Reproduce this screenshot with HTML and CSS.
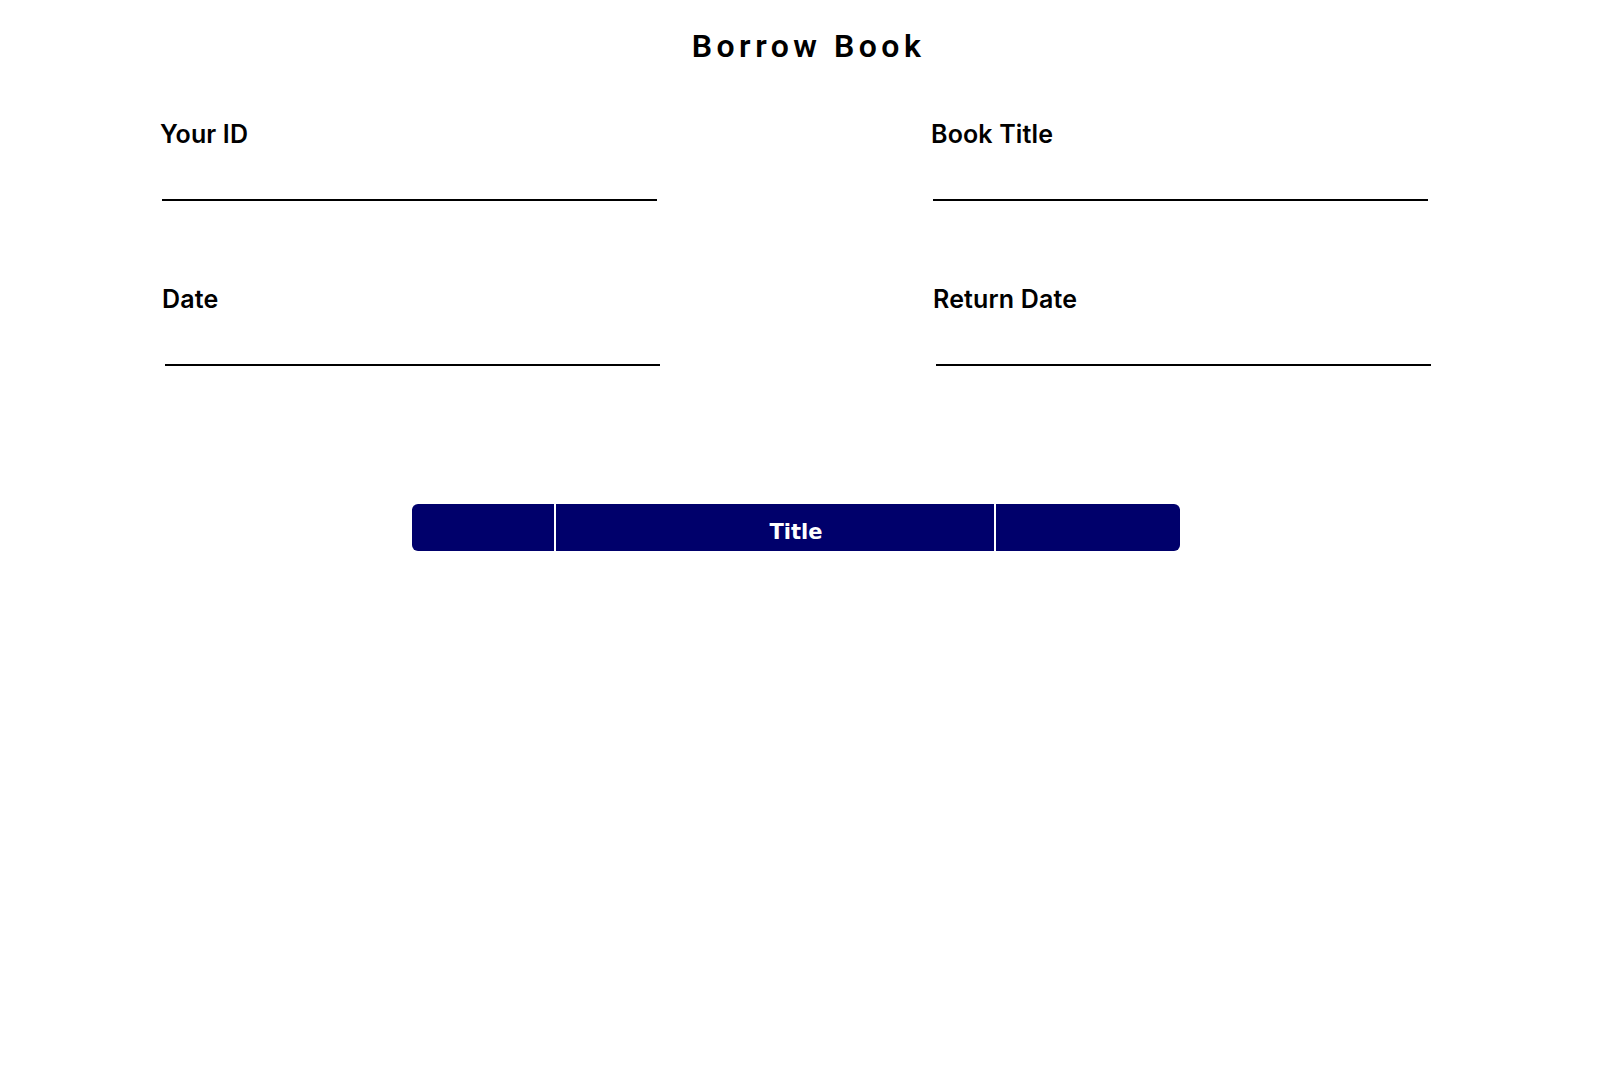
FILE: index.html
```html
<!DOCTYPE html>
<html lang="en">
<head>
<meta charset="utf-8">
<title>Borrow Book</title>
<link rel="stylesheet" href="styles.css">
</head>
<body>
<main class="page">
  <h1 class="title">Borrow Book</h1>
  <form class="form">
    <div class="field">
      <label class="label" for="uid">Your ID</label>
      <input class="line" id="uid" type="text">
    </div>
    <div class="field">
      <label class="label" for="btitle">Book Title</label>
      <input class="line" id="btitle" type="text">
    </div>
    <div class="field shift">
      <label class="label" for="bdate">Date</label>
      <input class="line" id="bdate" type="text">
    </div>
    <div class="field shift">
      <label class="label" for="rdate">Return Date</label>
      <input class="line" id="rdate" type="text">
    </div>
  </form>
  <table class="books">
    <thead>
      <tr>
        <th class="c1"></th>
        <th class="c2">Title</th>
        <th class="c3"></th>
      </tr>
    </thead>
    <tbody></tbody>
  </table>
</main>
</body>
</html>
```
FILE: styles.css
```css
html, body {
  margin: 0;
  padding: 0;
  background: #ffffff;
}

.page {
  font-family: "Inter", "Noto Sans", sans-serif;
  color: #000;
}

.title {
  margin: 28px 0 0;
  padding-left: 6px;
  text-align: center;
  font-family: "Roboto", "Liberation Sans", sans-serif;
  font-weight: 600;
  font-size: 32px;
  line-height: 37.5px;
  letter-spacing: 4.5px;
  color: #000;
}

.form {
  display: grid;
  grid-template-columns: 500px 500px;
  column-gap: 271px;
  row-gap: 84px;
  margin: 54px 0 0 160px;
}

.label {
  display: block;
  font-family: "Inter", sans-serif;
  font-weight: 600;
  font-size: 25px;
  line-height: 29px;
  letter-spacing: 0.15px;
  color: #000;
}

.line {
  display: block;
  box-sizing: content-box;
  width: 495px;
  height: 40px;
  margin: 10px 0 0 2px;
  padding: 0;
  border: 0;
  border-bottom: 2px solid #000;
  background: transparent;
  outline: none;
  font: 20px "Inter", sans-serif;
}

.field.shift .label {
  padding-left: 2px;
}

.field.shift .line {
  margin-left: 5px;
}

.books {
  margin: 136px 0 0 410px;
  border-collapse: separate;
  border-spacing: 2px;
}

.books th {
  background: #00006b;
  color: #fff;
  font-family: "DejaVu Sans", sans-serif;
  font-weight: 700;
  font-size: 21px;
  line-height: 24px;
  padding: 16px 0 7px;
  text-align: center;
}

.books .c1 {
  width: 142px;
  border-radius: 6px 0 0 6px;
}

.books .c2 {
  width: 396px;
  padding-left: 42px;
}

.books .c3 {
  width: 184px;
  border-radius: 0 6px 6px 0;
}
```
